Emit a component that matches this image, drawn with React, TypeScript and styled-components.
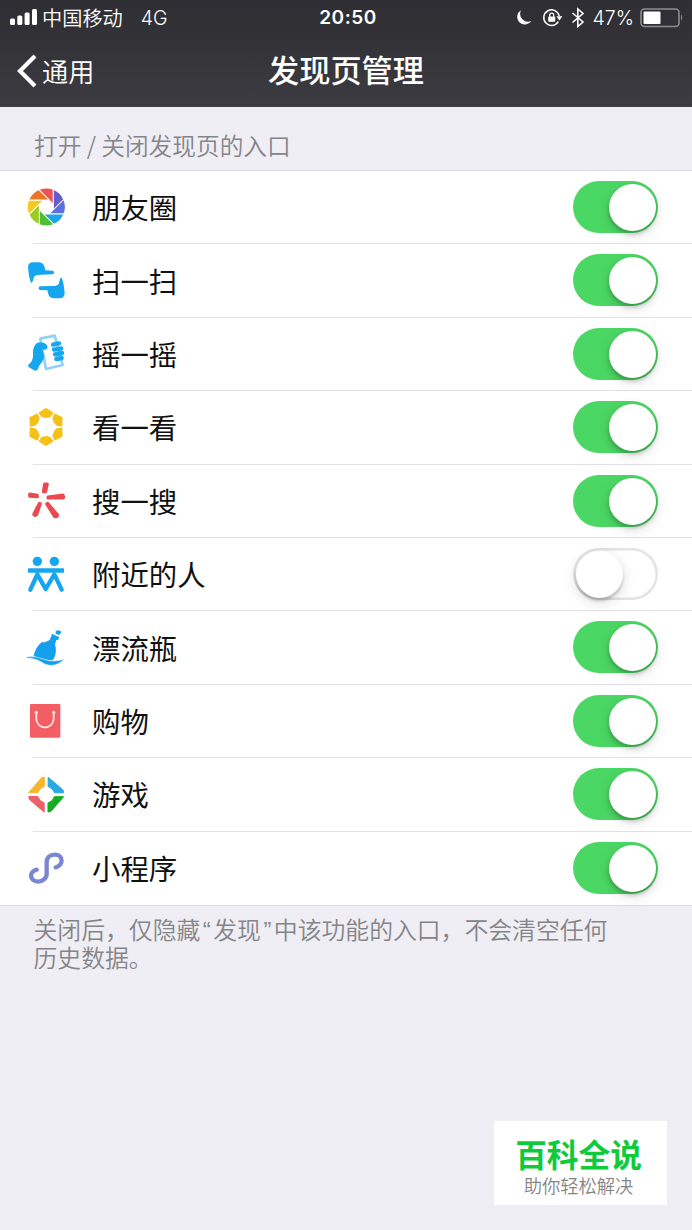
import React from "react";
import styled, { createGlobalStyle } from "styled-components";

const GlobalStyle = createGlobalStyle`
  * { box-sizing: border-box; }
  body { margin: 0; background: #efeef4; }
`;

const Screen = styled.div`
  position: relative;
  width: 692px;
  height: 1230px;
  overflow: hidden;
  background: #efeef4;
  font-family: "Noto Sans CJK SC", sans-serif;
  display: flex;
  flex-direction: column;
`;

const Header = styled.header`
  height: 107px;
  flex: none;
  color: #fff;
  background: linear-gradient(#2f2e34, #333237 40%, #3d3c42);
`;

const StatusBar = styled.div`
  height: 35px;
  display: grid;
  grid-template-columns: 1fr auto 1fr;
  align-items: center;
  padding: 0 8px 0 10px;
  font-family: Inter, "Noto Sans CJK SC", sans-serif;
  font-size: 18px;
`;

const StatusGroup = styled.div<{ $end?: boolean }>`
  display: flex;
  align-items: center;
  justify-content: ${(p) => (p.$end ? "flex-end" : "flex-start")};
`;

const Carrier = styled.span`
  font-family: "Noto Sans CJK SC", sans-serif;
  font-size: 20.2px;
  font-weight: 350;
  line-height: 30px;
  margin: 0 18px 0 5px;
`;

const Network = styled.span`
  font-size: 19.5px;
  font-weight: 300;
`;

const Clock = styled.span`
  font-size: 19px;
  font-weight: 600;
  letter-spacing: 0.5px;
  padding-left: 2px;
`;

const Percent = styled.span`
  font-size: 19.5px;
  font-weight: 300;
  margin: 0 6px 0 8px;
`;

const NavBar = styled.nav`
  height: 71px;
  display: grid;
  grid-template-columns: 1fr auto 1fr;
  align-items: center;
  padding: 0 16px;
`;

const Back = styled.div`
  display: flex;
  align-items: center;
  gap: 5px;
  font-size: 26.2px;
  font-weight: 350;
  line-height: 36px;
`;

const Title = styled.h1`
  margin: -4px 0 0;
  font-size: 31.2px;
  font-weight: 500;
  line-height: 40px;
`;

const SectionTitle = styled.div`
  height: 63px;
  flex: none;
  padding: 22px 34px 0;
  font-size: 23.7px;
  font-weight: 350;
  line-height: 32px;
  color: #858589;
`;

const List = styled.div`
  height: 736px;
  flex: none;
  display: grid;
  grid-template-rows: repeat(10, 1fr);
  background: #fff;
  border-top: 1px solid #dddde1;
  border-bottom: 1px solid #dddde1;
`;

const Row = styled.div`
  display: flex;
  align-items: center;
  padding: 0 34px 0 24px;
  background: linear-gradient(#e1e1e4, #e1e1e4) 33px 100% / 100% 1px no-repeat;
  &:last-child { background: none; }
`;

const Icon = styled.svg`
  width: 44px;
  height: 44px;
  flex: none;
  display: block;
`;

const Label = styled.span`
  flex: 1;
  margin: -1px 0 0 24px;
  font-size: 28.4px;
  font-weight: 400;
  line-height: 40px;
  color: #111;
`;

const Toggle = styled.span<{ $on: boolean }>`
  width: 85px;
  height: 52px;
  flex: none;
  padding: 3px 2px 2px 3px;
  border-radius: 26px;
  display: flex;
  justify-content: ${(p) => (p.$on ? "flex-end" : "flex-start")};
  background: ${(p) => (p.$on ? "#4bd763" : "#fff")};
  box-shadow: ${(p) => (p.$on ? "none" : "inset 0 0 0 2.5px #e3e3e4")};
  margin-top: -1.4px;
`;

const Knob = styled.span<{ $on: boolean }>`
  width: 47px;
  height: 47px;
  border-radius: 50%;
  background: #fff;
  box-shadow: ${(p) =>
    p.$on
      ? "0 3px 4px rgba(0,0,0,.22), 0 4px 14px rgba(0,0,0,.13)"
      : "0 3px 3px rgba(0,0,0,.2), 0 4px 14px rgba(0,0,0,.14)"};
`;

const Note = styled.p`
  margin: 11px 0 0;
  padding: 0 0 0 33.5px;
  font-family: "Liberation Sans", "Noto Sans CJK SC", sans-serif;
  font-size: 23.83px;
  font-weight: 350;
  line-height: 28px;
  color: #858589;
`;

const Quote = styled.span`
  padding: 0 2.5px;
`;

const Badge = styled.div`
  position: absolute;
  left: 494px;
  top: 1121px;
  width: 173px;
  height: 84px;
  padding: 16px 4px 0 0;
  background: #fff;
  display: flex;
  flex-direction: column;
  align-items: center;
  font-family: "Liberation Sans", "Noto Sans CJK SC", sans-serif;
`;

const BadgeName = styled.strong`
  font-size: 31.7px;
  font-weight: 700;
  line-height: 39px;
  color: #0fcb3b;
`;

const BadgeSlogan = styled.span`
  font-size: 18.3px;
  font-weight: 350;
  line-height: 22px;
  color: #858585;
`;

const blades = ["#ee5253", "#665bd3", "#5b6fe0", "#1ba5ea", "#4cbf35", "#9acd23", "#f9c81e", "#ec7623"];

const Moments = () => (
  <Icon viewBox="12 32 132 132">
    <g transform="translate(79 95)">
      {blades.map((c, i) => (
        <path key={c} d="M21-8.7V-53A57 57 0 0 0-22.6-52.3Z" fill={c} stroke="#fff" strokeWidth="3" transform={`rotate(${i * 45})`} />
      ))}
    </g>
  </Icon>
);

const hand = "M24 276Q24 261 40 261L56 261Q69 261 73 273L76 285L98 286Q103 287 102 292Q102 297 97 297L62 298Q46 298 42 304L38 318Q36 325 32 321L27 302Z";

const Scan = () => (
  <Icon viewBox="12 251 132 132" fill="#14a7ef">
    <path d={hand} />
    <path d={hand} transform="rotate(180 79 315)" />
  </Icon>
);

const Shake = () => (
  <Icon viewBox="12 37 132 132">
    <path d="M61 57L104 48L128 136L78 148Z" fill="#fff" stroke="#90d2f6" strokeWidth="8" strokeLinejoin="round" />
    <path d="M24 136Q40 125 39 106Q37 82 50 71Q60 65 74 71Q85 77 82 86Q77 92 67 90Q77 112 66 127Q56 138 54 148Q49 156 42 152L26 142Z" fill="#14a7ef" />
    <g stroke="#14a7ef" strokeWidth="13" strokeLinecap="round">
      <path d="M99 75L117 71M102 90L124 86M105 104L126 100M109 118L125 115" />
    </g>
  </Icon>
);

const Look = () => (
  <Icon viewBox="12 257 132 132">
    <g transform="translate(78 320)" fill="#f5c116" stroke="#f5c116" strokeWidth="6" strokeLinejoin="round">
      {[0, 60, 120, 180, 240, 300].map((a) => (
        <path key={a} d="M0-54L19-42L11-32L0-30L-11-32L-19-42Z" transform={`rotate(${a})`} />
      ))}
    </g>
  </Icon>
);

const Search = () => (
  <Icon viewBox="12 28 132 132" fill="#e9494f" stroke="#e9494f" strokeWidth="9" strokeLinejoin="round">
    <path d="M74 43L82 43L77 66L70 66Z" />
    <path d="M29 73L52 77L52 81L29 80Z" />
    <path d="M84 82L129 76Q132 81 130 85L84 85Z" />
    <path d="M58 101L61 102L50 135Q44 140 41 134Z" />
    <path d="M80 103L83 101L113 136Q111 143 104 141Z" />
  </Icon>
);

const Nearby = () => (
  <Icon viewBox="12 248 132 132" fill="#14a7ef">
    <circle cx="52" cy="273" r="14" />
    <circle cx="103" cy="273" r="14" />
    <rect x="24" y="294" width="108" height="13" rx="2" />
    <path d="M31 358L52 312L77 356L103 312L125 358" fill="none" stroke="#14a7ef" strokeWidth="13" strokeLinecap="round" strokeLinejoin="round" />
  </Icon>
);

const Bottle = () => (
  <Icon viewBox="12 34 132 132" fill="#14a0ec">
    <path d="M107 50Q112 45 119 48Q127 50 123 55L117 61L107 57Z" />
    <path d="M96 57L118 68L114 77L109 75L105 90Q113 111 99 137Q72 136 41 124Q46 98 65 83Q83 82 89 75L94 65Z" />
    <path d="M19 127Q46 123 70 133Q100 145 133 133Q108 160 75 149Q52 131 19 130Z" stroke="#fff" strokeWidth="1.5" />
  </Icon>
);

const Shop = () => (
  <Icon viewBox="12 252 132 132">
    <rect x="30" y="267" width="91" height="101" rx="4" fill="#f25e63" />
    <path d="M49 292V311A26 26 0 0 0 101 311V292" fill="none" stroke="#ffe3dc" strokeWidth="5.5" />
    <circle cx="49" cy="292" r="5" fill="#ffe3dc" />
    <circle cx="101" cy="292" r="5" fill="#ffe3dc" />
  </Icon>
);

const Games = () => (
  <Icon viewBox="12 39 132 132">
    {["#f5b62c", "#27a9e3", "#16ab22", "#ec606b"].map((c, i) => (
      <path key={c} d="M26 98L64 54Q67 52 73 52V79Q58 84 54 98Z" fill={c} stroke={c} strokeWidth="3" strokeLinejoin="round" transform={`rotate(${i * 90} 78.5 104)`} />
    ))}
  </Icon>
);

const MiniApp = () => (
  <Icon viewBox="12 259 132 132">
    <path d="M107 323C132 317 130 285 105 285C90 285 80 294 80 307V343C80 356 68 366 54 366C28 365 26 336 50 330" fill="none" stroke="#7b86d0" strokeWidth="13" strokeLinecap="round" />
  </Icon>
);

const entries = [
  { name: "朋友圈", Glyph: Moments, on: true },
  { name: "扫一扫", Glyph: Scan, on: true },
  { name: "摇一摇", Glyph: Shake, on: true },
  { name: "看一看", Glyph: Look, on: true },
  { name: "搜一搜", Glyph: Search, on: true },
  { name: "附近的人", Glyph: Nearby, on: false },
  { name: "漂流瓶", Glyph: Bottle, on: true },
  { name: "购物", Glyph: Shop, on: true },
  { name: "游戏", Glyph: Games, on: true },
  { name: "小程序", Glyph: MiniApp, on: true },
];

const SignalBars = () => (
  <svg width="27" height="18" viewBox="0 0 27 18" fill="#fff">
    <rect x="0" y="9.5" width="5" height="6.5" rx="1.5" />
    <rect x="7.3" y="6.5" width="5" height="9.5" rx="1.5" />
    <rect x="14.6" y="3.5" width="5" height="12.5" rx="1.5" />
    <rect x="22" y="0" width="5" height="16" rx="1.5" />
  </svg>
);

const StatusIcons = () => (
  <svg width="70" height="22" viewBox="-2 0 70 22" fill="none" stroke="#fff">
    <path d="M4 3.2A7.7 7.7 0 1 0 14.4 14A8 8 0 0 1 4 3.2Z" fill="#fff" stroke="none" />
    <path d="M41.3 14.6A7.8 7.8 0 1 1 42.2 9" strokeWidth="1.5" />
    <path d="M39.4 9.3H45.4L42.4 13.5Z" fill="#fff" stroke="none" />
    <rect x="31.2" y="9.4" width="7" height="5.4" rx="0.8" fill="#fff" stroke="none" />
    <path d="M32.7 9.8V8.2A2 2 0 0 1 36.7 8.2V9.8" strokeWidth="1.3" />
    <path d="M55.5 6L66 15L60.8 19.5V2L66 6.5L55.5 15.5" strokeWidth="1.6" />
  </svg>
);

const Battery = () => (
  <svg width="44" height="20" viewBox="0 0 44 20">
    <rect x="1" y="1" width="38" height="17.5" rx="3.5" fill="none" stroke="#8d8d90" strokeWidth="1.6" />
    <rect x="3.5" y="3.5" width="17" height="12.5" rx="1" fill="#fff" />
    <path d="M41 6.5Q43.5 9.5 41 12.5Z" fill="#8d8d90" />
  </svg>
);

export default function App() {
  return (
    <Screen>
      <GlobalStyle />
      <Header>
        <StatusBar>
          <StatusGroup>
            <SignalBars />
            <Carrier>中国移动</Carrier>
            <Network>4G</Network>
          </StatusGroup>
          <Clock>20:50</Clock>
          <StatusGroup $end>
            <StatusIcons />
            <Percent>47%</Percent>
            <Battery />
          </StatusGroup>
        </StatusBar>
        <NavBar>
          <Back>
            <svg width="21" height="34" viewBox="0 0 21 34">
              <path d="M19 2L4 17L19 32" fill="none" stroke="#fff" strokeWidth="4.2" />
            </svg>
            通用
          </Back>
          <Title>发现页管理</Title>
        </NavBar>
      </Header>
      <SectionTitle>打开 / 关闭发现页的入口</SectionTitle>
      <List>
        {entries.map(({ name, Glyph, on }) => (
          <Row key={name}>
            <Glyph />
            <Label>{name}</Label>
            <Toggle $on={on}>
              <Knob $on={on} />
            </Toggle>
          </Row>
        ))}
      </List>
      <Note>
        关闭后，仅隐藏<Quote>“</Quote>发现<Quote>”</Quote>中该功能的入口，不会清空任何
        <br />
        历史数据。
      </Note>
      <Badge>
        <BadgeName>百科全说</BadgeName>
        <BadgeSlogan>助你轻松解决</BadgeSlogan>
      </Badge>
    </Screen>
  );
}
